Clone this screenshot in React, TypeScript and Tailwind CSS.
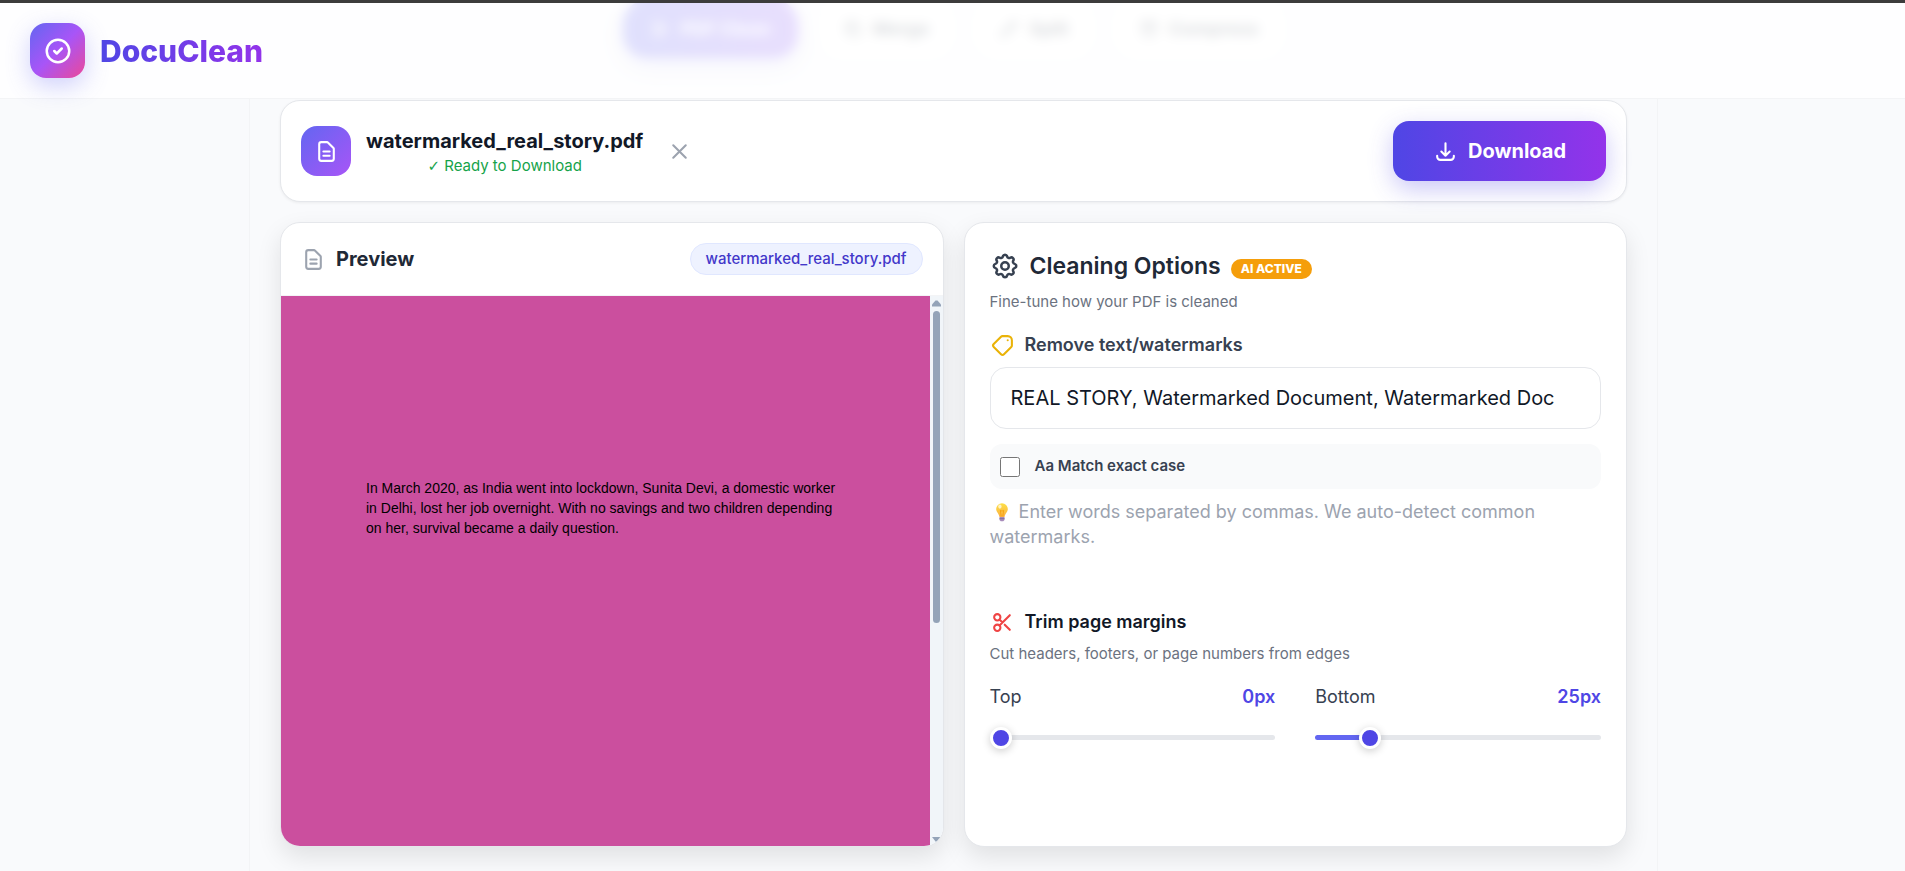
import { useState } from 'react'
import {
  HiOutlineCheckCircle,
  HiOutlineCog,
  HiOutlineDocumentText,
  HiOutlineDownload,
  HiOutlineDuplicate,
  HiOutlineArchive,
  HiOutlinePencil,
  HiOutlineScissors,
  HiOutlineSparkles,
  HiOutlineTag,
  HiOutlineX,
} from 'react-icons/hi'

const fileName = 'watermarked_real_story.pdf'

const tabs = [
  { label: 'PDF Clean', icon: HiOutlineSparkles, active: true },
  { label: 'Merge', icon: HiOutlineDuplicate, active: false },
  { label: 'Split', icon: HiOutlinePencil, active: false },
  { label: 'Compress', icon: HiOutlineArchive, active: false },
]

function Header() {
  return (
    <header className="fixed inset-x-0 top-0 z-20 border-t-3 border-b border-t-[#3c3c3c] border-b-gray-100 bg-white/80 px-[30px] py-5 backdrop-blur-[6px]">
      <a href="#" className="inline-flex items-center gap-[15px] align-top">
        <span className="flex size-[55px] items-center justify-center rounded-2xl bg-linear-to-br/srgb from-[#6366f1] via-[#a855f7] to-[#ec4899] text-white shadow-[0_8px_25px_rgba(99,102,241,0.3)]">
          <HiOutlineCheckCircle className="size-[30px]" />
        </span>
        <span className="bg-linear-to-r/srgb from-[#4f46e5] to-[#9333ea] bg-clip-text text-3xl font-extrabold text-transparent">
          DocuClean
        </span>
      </a>
    </header>
  )
}

function Bulb() {
  return (
    <svg viewBox="0 0 24 24" className="mx-0.5 inline-block size-5 align-text-bottom" aria-hidden="true">
      <defs>
        <linearGradient id="bulb" x1="0" y1="0" x2="0" y2="1">
          <stop offset="0" stopColor="#fde047" />
          <stop offset="1" stopColor="#fbb040" />
        </linearGradient>
      </defs>
      <path d="M12 1.5a7 7 0 0 0-7 7c0 3.6 3.4 5.600 4 9.500h6c.6-3.900 4-5.900 4-9.500a7 7 0 0 0-7-7z" fill="url(#bulb)" />
      <path d="M10 10l1 7M14 10l-1 7M10 10q2 2 4 0" stroke="#f59e0b" strokeWidth="1" fill="none" />
      <ellipse cx="9.500" cy="5.500" rx="2" ry="2.500" fill="#fef3c7" />
      <path d="M9 18h6v3.500l-1.500 1.500h-3L9 21.500z" fill="#a78bba" />
      <path d="M9 20h6" stroke="#7c6a94" strokeWidth="1" />
    </svg>
  )
}

type SliderProps = {
  id: string
  label: string
  value: number
  onChange: (value: number) => void
}

function MarginSlider({ id, label, value, onChange }: SliderProps) {
  const fill = (value / 150) * 100
  return (
    <div>
      <div className="flex items-center justify-between text-lg leading-7">
        <label htmlFor={id} className="text-[#374151]">{label}</label>
        <span className="font-semibold text-[#4f46e5]">{value}px</span>
      </div>
      <input
        id={id}
        type="range"
        min={0}
        max={150}
        value={value}
        onChange={(e) => onChange(Number(e.target.value))}
        style={{ background: `linear-gradient(to right, #6366f1 ${fill}%, #e5e7eb ${fill}%)` }}
        className="mt-6 block h-[5px] w-full appearance-none rounded-full [&::-webkit-slider-thumb]:size-[22px] [&::-webkit-slider-thumb]:appearance-none [&::-webkit-slider-thumb]:rounded-full [&::-webkit-slider-thumb]:border-3 [&::-webkit-slider-thumb]:border-white [&::-webkit-slider-thumb]:bg-[#4f46e5] [&::-webkit-slider-thumb]:shadow-[0_2px_8px_rgba(0,0,0,0.2)]"
      />
    </div>
  )
}

function Preview() {
  return (
    <section className="overflow-hidden rounded-[20px] border border-gray-200 bg-white shadow-[0_10px_25px_rgba(0,0,0,0.1)]">
      <div className="flex items-center justify-between border-b border-gray-100 p-5">
        <h2 className="flex items-center gap-2.5 text-xl font-bold text-[#1f2937]">
          <HiOutlineDocumentText className="size-[25px] text-[#9ca3af]" />
          Preview
        </h2>
        <span className="rounded-full border border-[#e0e7ff] bg-[#eef2ff] px-[15px] py-1 text-[15px] leading-[22px] font-medium text-[#4338ca]">
          {fileName}
        </span>
      </div>
      <div className="flex h-[550px]">
        <div className="flex-1 bg-[#cb4f9e] px-[85px] pt-[182px] font-['Liberation_Sans',sans-serif] text-sm leading-5 text-black">
          <p>
            In March 2020, as India went into lockdown, Sunita Devi, a domestic worker
            <br />
            in Delhi, lost her job overnight. With no savings and two children depending
            <br />
            on her, survival became a daily question.
          </p>
        </div>
        {/* Scroll track */}
        <div className="flex w-[13px] flex-col items-center bg-[#f1f5f9] text-[#94a3b8]">
          <svg viewBox="0 0 9 15" className="h-[15px] w-[9px]" fill="currentColor" aria-hidden="true">
            <path d="M3.500 4.500h2L9 8.500v2H0v-2z" />
          </svg>
          <div className="h-[312px] w-[7px] rounded-full bg-[#94a3b8]" />
          <svg viewBox="0 0 9 15" className="mt-auto h-[15px] w-[9px]" fill="currentColor" aria-hidden="true">
            <path d="M0 6h9L5 11H4z" />
          </svg>
        </div>
      </div>
    </section>
  )
}

function Options() {
  const [words, setWords] = useState('REAL STORY, Watermarked Document, Watermarked Doc')
  const [matchCase, setMatchCase] = useState(false)
  const [top, setTop] = useState(0)
  const [bottom, setBottom] = useState(25)

  return (
    <section className="rounded-[20px] border border-gray-200 bg-white p-[25px] shadow-[0_10px_25px_rgba(0,0,0,0.1)]">
      <div className="flex items-center gap-2.5">
        <HiOutlineCog className="size-[30px] text-[#374151]" />
        <h2 className="text-[23px] leading-9 font-semibold text-[#1f2937]">Cleaning Options</h2>
        <span className="mt-1.5 rounded-full bg-[#f59e0b] px-2.5 text-xs leading-5 font-extrabold text-white">AI ACTIVE</span>
      </div>
      <p className="mt-1.5 text-[15px] leading-6 text-[#6b7280]">Fine-tune how your PDF is cleaned</p>

      <label htmlFor="words" className="mt-[17px] flex items-center gap-2.5 text-lg leading-7 font-semibold text-[#374151]">
        <HiOutlineTag className="size-[25px] rotate-90 text-[#eab308]" />
        Remove text/watermarks
      </label>
      <input
        id="words"
        type="text"
        value={words}
        onChange={(e) => setWords(e.target.value)}
        className="mt-2 h-[62px] w-full rounded-2xl border border-gray-200 px-5 text-xl text-[#111827]"
      />

      <label className="mt-[15px] flex h-[45px] items-center gap-[15px] rounded-xl bg-[#f9fafb] px-2.5 text-[15px] font-semibold text-[#374151]">
        <input
          type="checkbox"
          checked={matchCase}
          onChange={(e) => setMatchCase(e.target.checked)}
          className="size-5"
        />
        Aa Match exact case
      </label>
      <p className="mt-2.5 text-lg leading-[25px] text-[#9ca3af]">
        <Bulb /> Enter words separated by commas. We auto-detect common watermarks.
      </p>

      <h3 className="mt-[59px] flex items-center gap-2.5 text-lg leading-7 font-semibold text-[#111827]">
        <HiOutlineScissors className="size-[25px] text-[#ef4444]" />
        Trim page margins
      </h3>
      <p className="mt-1.5 text-[15px] leading-6 text-[#6b7280]">Cut headers, footers, or page numbers from edges</p>
      <div className="mt-[17px] grid grid-cols-2 gap-10">
        <MarginSlider id="top" label="Top" value={top} onChange={setTop} />
        <MarginSlider id="bottom" label="Bottom" value={bottom} onChange={setBottom} />
      </div>
    </section>
  )
}

export default function App() {
  return (
    <div className="min-h-screen bg-[#f9fafc] pl-0.5 font-[Inter,sans-serif]">
      <Header />

      <main className="mx-auto min-h-screen max-w-[1409px] border-x border-gray-100 px-[30px] pb-6">
        <nav className="mb-[42px] flex justify-center gap-5">
          {tabs.map(({ label, icon: Icon, active }) => (
            <button
              key={label}
              type="button"
              className={
                active
                  ? 'flex h-[58px] items-center gap-2.5 rounded-3xl bg-linear-to-r/srgb from-[#6366f1] to-[#8b5cf6] px-[27px] text-lg font-bold text-white shadow-[0_8px_25px_rgba(99,102,241,0.3)]'
                  : 'flex h-[58px] items-center gap-2.5 rounded-3xl bg-white px-[25px] text-lg font-bold text-[#4b5563]'
              }
            >
              <Icon className="size-5" />
              {label}
            </button>
          ))}
        </nav>

        <section className="flex items-center justify-between rounded-[20px] border border-gray-200 bg-white p-5 shadow-[0_1px_3px_rgba(0,0,0,0.06)]">
          <div className="flex items-center">
            <div className="flex size-[50px] items-center justify-center rounded-2xl bg-linear-to-br/srgb from-[#6366f1] to-[#a855f7] text-white">
              <HiOutlineDocumentText className="size-[25px]" />
            </div>
            <div className="ml-[15px] pt-0.5 text-center">
              <h1 className="text-xl leading-7 font-bold text-[#111827]">{fileName}</h1>
              <p className="text-[15px] leading-[22px] text-[#16a34a]">
                <span className="font-['DejaVu_Sans',sans-serif]">✓</span> Ready to Download
              </p>
            </div>
            <button type="button" aria-label="Remove file" className="ml-5 p-1 text-[#9ca3af]">
              <HiOutlineX className="size-[25px]" />
            </button>
          </div>
          <button
            type="button"
            className="flex h-[60px] items-center gap-2.5 rounded-2xl bg-linear-to-r/srgb from-[#4f46e5] to-[#9333ea] px-10 text-xl font-bold text-white shadow-[0_8px_25px_rgba(79,70,229,0.3)]"
          >
            <HiOutlineDownload className="size-[25px]" />
            Download
          </button>
        </section>

        <div className="mt-5 grid grid-cols-2 gap-5">
          <Preview />
          <Options />
        </div>
      </main>
    </div>
  )
}
